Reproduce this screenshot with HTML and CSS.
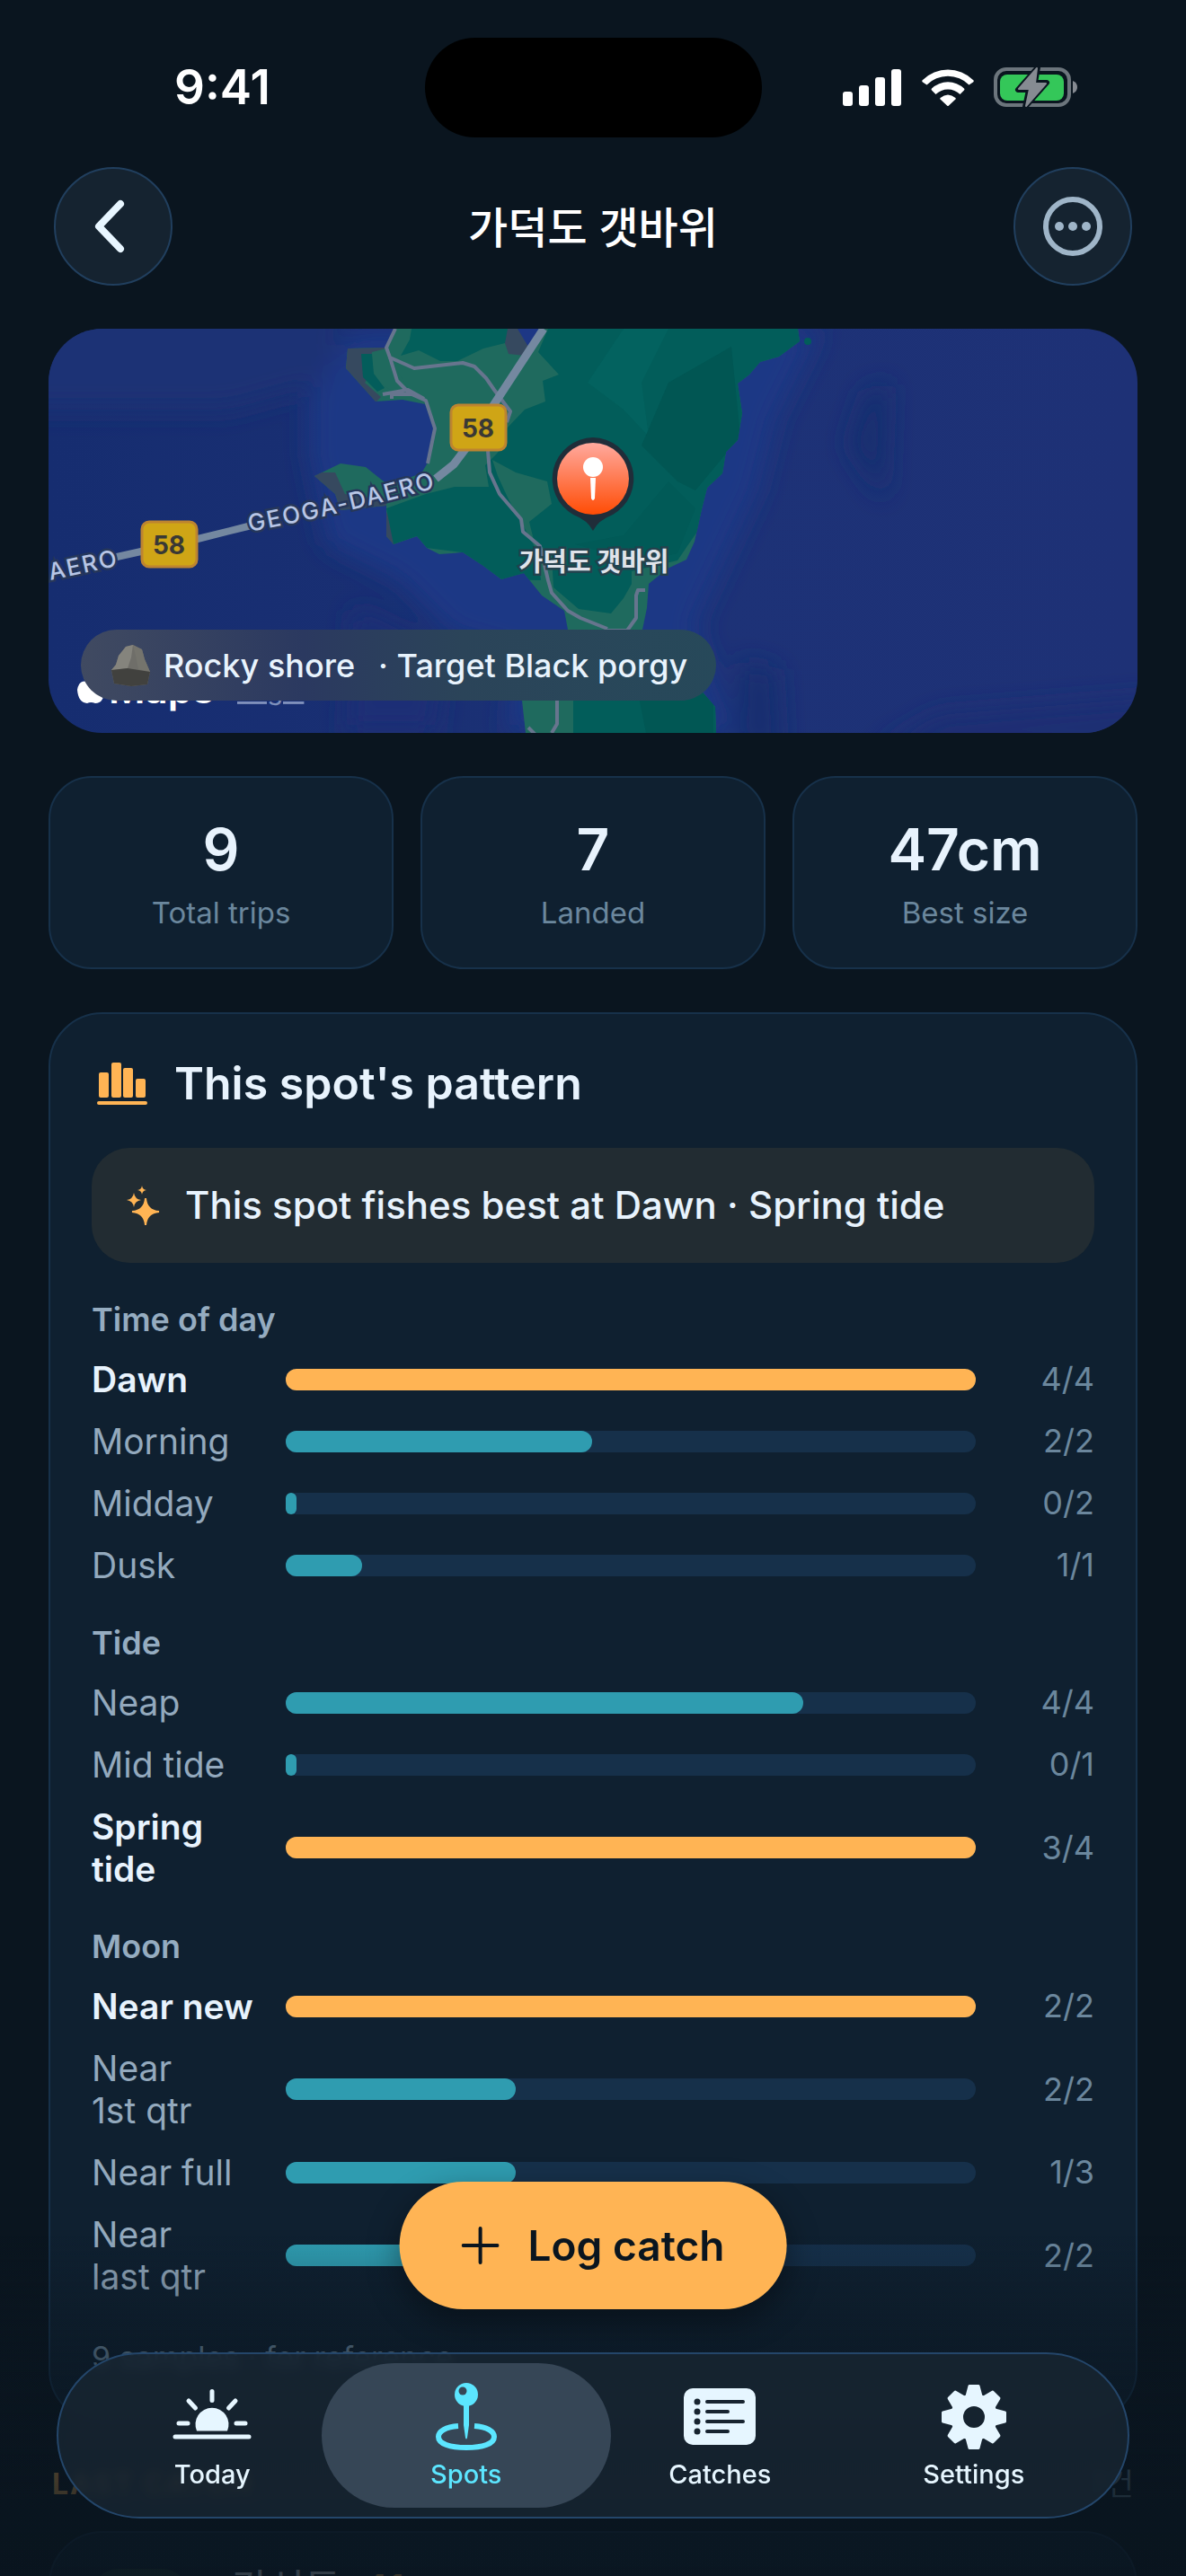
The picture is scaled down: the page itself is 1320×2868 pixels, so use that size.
FILE: index.html
```html
<!DOCTYPE html>
<html lang="en">
  <head>
    <meta charset="UTF-8" />
    <meta name="viewport" content="width=device-width, initial-scale=1.0" />
    <title>가덕도 갯바위</title>
    <link rel="stylesheet" href="styles.css">
  </head>

  <body>
    <div class="status-bar">
      <span class="time">9:41</span>
      <span class="island"></span>
      <span class="status-icons">
        <svg width="66" height="42" viewBox="0 0 66 42" fill="#fff">
          <rect x="0" y="26" width="11" height="16" rx="3" />
          <rect x="18" y="19" width="11" height="23" rx="3" />
          <rect x="36" y="10" width="11" height="32" rx="3" />
          <rect x="54" y="1" width="11" height="41" rx="3" />
        </svg>
        <svg width="58" height="42" viewBox="0 0 58 42" fill="#fff">
          <path d="M1 13 A40 40 0 0 1 57 13 Q58.500 14 57 15.500 L52.500 18.500 A33.500 33.500 0 0 0 5.500 18.500 L1 15.500 Q-.5 14 1 13Z" />
          <path d="M11 22.500 A26 26 0 0 1 47 22.500 Q48 23.500 47 24.500 L42.500 29 A19.500 19.500 0 0 0 15.500 29 L11 24.500 Q10 23.500 11 22.500Z" />
          <path d="M20.500 33 Q29 26 37.500 33 Q38 34 37.500 34.500 L30 41.500 Q29 42.500 28 41.500 L20.500 34.500 Q20 34 20.500 33Z" />
        </svg>
        <svg width="94" height="46" viewBox="0 0 94 46">
          <rect x="2" y="3" width="82" height="40" rx="12" fill="none" stroke="#6c757c" stroke-width="4" />
          <path d="M88 16 Q93 18 93 23 Q93 28 88 30Z" fill="#868b92" />
          <rect x="7" y="9" width="71" height="29" rx="8" fill="#34c759" />
          <path d="M49 1 L27 26 H39 L35 45 L59 18 H46 L49 1Z" fill="#868b92" stroke="#0a151f" stroke-width="6" stroke-linejoin="round" />
          <path d="M48 2 L28 25 H40 L36 44 L58 19 H46 L48 2Z" fill="#868b92" stroke="#868b92" stroke-width="2" stroke-linejoin="round" />
        </svg>
      </span>
    </div>

    <header class="nav-header">
      <button class="round-btn" type="button" aria-label="Back">
        <svg width="48" height="64" viewBox="0 0 48 64"><path d="M32 7 L8 32 L32 57" fill="none" stroke="#e8f6ff" stroke-width="8" stroke-linecap="round" stroke-linejoin="round" /></svg>
      </button>
      <h1>가덕도 갯바위</h1>
      <button class="round-btn" type="button" aria-label="More">
        <svg width="66" height="66" viewBox="0 0 66 66" fill="#9fb5c8">
          <circle cx="33" cy="33" r="30" fill="none" stroke="#9fb5c8" stroke-width="6" />
          <circle cx="18" cy="33" r="5" /><circle cx="33" cy="33" r="5" /><circle cx="48" cy="33" r="5" />
        </svg>
      </button>
    </header>

    <main>
      <section class="map">
        <svg class="map-art" viewBox="0 0 1212 450" preserveAspectRatio="xMidYMid slice">
          <defs>
            <linearGradient id="sea" x1="0" y1="0" x2="1" y2="0">
              <stop offset="0" stop-color="#162d70" />
              <stop offset=".3" stop-color="#192f73" />
              <stop offset=".6" stop-color="#1d3277" />
              <stop offset="1" stop-color="#1e3176" />
            </linearGradient>
            <linearGradient id="pin" x1="0" y1="0" x2="0" y2="1">
              <stop offset="0" stop-color="#ffa99e" />
              <stop offset="1" stop-color="#ff4c05" />
            </linearGradient>
            <filter id="soft" x="-20%" y="-20%" width="140%" height="140%"><feGaussianBlur stdDeviation="14" /></filter>
            <path id="coast" d="M386 0 L376 21 L333 22 L331 44 L347 62 L364 81 L394 79 L419 84 L429 111 L425 144 L415 161 L378 174 L353 154 L325 150 L296 164 L319 184 L325 202 L376 197 L376 231 L384 240 L410 231 L421 244 L435 251 L461 249 L484 264 L504 279 L529 272 L549 297 L574 314 L578 335 L540 390 L527 414 L531 450 H743 L742 421 L729 406 L690 370 L661 335 L666 311 L668 284 L689 267 L710 257 L719 237 L727 201 L733 177 L750 161 L754 137 L767 124 L772 94 L767 61 L780 51 L792 37 L813 31 L836 14 L834 0Z" />
            <clipPath id="land"><use href="#coast" /></clipPath>
          </defs>
          <rect width="1212" height="450" fill="url(#sea)" />
          <g filter="url(#soft)">
            <path d="M-40 -40 H340 L310 60 L200 90 L-40 90Z" fill="#1e3175" />
            <path d="M340 0 L290 80 L290 140 L310 240 L390 280 L450 340 L520 360 L510 450 H760 L720 330 L790 180 L810 100 L860 0Z" fill="#1e3785" />
            <path d="M340 310 L440 360 L430 450 H330Z" fill="#1c2f76" />
            <path d="M910 70 L935 60 L930 190 L890 130Z" fill="#182e70" />
            <path d="M770 370 L810 380 L815 470 H770Z" fill="#162d70" />
            <path d="M920 470 L990 430 L1240 410 V470Z" fill="#1b2e73" />
          </g>
          <use href="#coast" fill="#1f6a5e" />
          <g clip-path="url(#land)">
            <path d="M330 20 H378 L372 32 L352 60 L370 76 L362 84 L325 60Z" fill="#36495f" />
            <path d="M360 26 L376 22 L384 40 L400 66 L390 74 L368 60 L358 40Z" fill="#1f6a5e" />
            <path d="M348 28 H360 L362 50 L374 66 L366 70 L350 54Z" fill="#035d5b" />
            <path d="M290 160 H319 L330 184 L376 192 V205 H315Z" fill="#36495f" />
            <path d="M374 200 L390 232 L384 244 L372 240Z" fill="#36495f" />
            <path d="M404 0 H520 L508 16 L484 22 L455 36 L436 36 L412 24 L392 30 L402 12Z" fill="#035f5b" />
            <path d="M511 0 H545 L530 30 L512 28 L508 16Z" fill="#36495f" />
            <path d="M522 0 H546 L534 20Z" fill="#1d3785" />
            <path d="M545 26 L568 51 L550 58 L553 81 L530 90 L510 111 L500 138 L486 152 L490 176 L452 176 L420 184 L376 200 L384 240 L410 231 L421 244 L461 249 L504 279 L548 280 L545 250 L532 226 L512 190 L500 164 L494 146 L520 160 L555 170 L560 195 L535 215 L540 235 L560 252 L562 288 L590 312 L626 317 L640 300 L649 284 V270 L700 258 L850 40 V0 H556Z" fill="#025d5a" />
            <path d="M640 0 H690 L660 60 L668 120 L640 90 L600 60Z" fill="#03625f" />
            <path d="M690 60 L760 20 L770 120 L720 180 L700 170 L660 130Z" fill="#015653" />
            <path d="M586 240 L640 230 L690 170 L720 200 L700 250 L660 260Z" fill="#015a57" />
            <path d="M584 364 H760 V450 H584Z" fill="#025d5a" />
            <path d="M655 400 L740 380 V450 H665Z" fill="#015754" />
          </g>
          <circle cx="845" cy="14" r="4" fill="#025d5a" />
          <g fill="none" stroke="#67758e" stroke-width="4" stroke-linejoin="round">
            <path d="M386 0 L376 21 L380 32 L407 44 L461 38 L474 42 L487 55 L496 68 L514 92 L510 104" />
            <path d="M380 32 L388 58 L402 72 L420 80 L430 111 L422 150" />
            <path d="M372 73 L400 68 L418 78 M382 78 V73 H404" />
            <path d="M489 136 L491 160 L502 184 L526 212 L528 226 L547 242 L556 280 L560 294 L578 314 L592 322 L622 334" />
            <path d="M664 291 H656 L654 297 V322 L644 336 H620" />
            <path d="M566 414 V440 L560 450 M534 444 L544 454" />
          </g>
          <path d="M551 0 L496 84 L470 126 L451 151 L431 167" fill="none" stroke="#7488a0" stroke-width="9" />
          <path d="M226 219 L166 234 L76 254" fill="none" stroke="#7488a0" stroke-width="8" />
          <path id="road-a" d="M224 226 Q330 206 450 172" fill="none" />
          <path id="road-b" d="M2 280 L100 259" fill="none" />
          <g class="road-name">
            <text><textPath href="#road-a">GEOGA-DAERO</textPath></text>
            <text><textPath href="#road-b">AERO</textPath></text>
          </g>
          <g class="shield">
            <rect x="448" y="85" width="61" height="50" rx="8" />
            <text x="478" y="121">58</text>
            <rect x="104" y="215" width="61" height="50" rx="8" />
            <text x="134" y="251">58</text>
          </g>
          <path d="M606 121 A46 46 0 0 1 628 207 Q612 213 606 225 Q600 213 584 207 A46 46 0 0 1 606 121Z" fill="#202d39" />
          <circle cx="606" cy="167" r="40" fill="url(#pin)" />
          <circle cx="606" cy="154" r="11" fill="#fff" />
          <path d="M603 166 H609 L608 189 Q606 193 604 189Z" fill="#fff" />
          <text class="pin-name" x="607" y="270">가덕도 갯바위</text>
          <path d="M47 394 Q62 388 62 402 Q62 417 52 417 Q47 415 43 417 Q33 416 32 402 Q34 389 47 394Z" fill="#fff" />
          <text class="map-brand" x="67" y="417">Maps</text>
          <text class="map-legal" x="210" y="413">Legal</text>
        </svg>
        <div class="map-chip">
          <svg width="44" height="46" viewBox="0 0 44 46">
            <path d="M8 12 L16 2 L24 0 L34 5 L37 16 L43 30 L40 44 L22 46 L3 43 L0 28 L5 22Z" fill="#6f6e69" />
            <path d="M8 12 L16 2 L24 0 L22 14 L18 26 L0 28 L5 22Z" fill="#85847d" />
            <path d="M24 0 L34 5 L37 16 L43 30 L30 27 L27 12Z" fill="#75746d" />
            <path d="M0 28 L18 26 L43 30 L40 44 L22 46 L3 43Z" fill="#41413e" />
          </svg>
          <span>Rocky shore</span>
          <span class="target">· Target Black porgy</span>
        </div>
      </section>

      <section class="stats">
        <div class="stat"><strong>9</strong><span>Total trips</span></div>
        <div class="stat"><strong>7</strong><span>Landed</span></div>
        <div class="stat"><strong>47cm</strong><span>Best size</span></div>
      </section>

      <section class="pattern">
        <h2>
          <svg width="72" height="60" viewBox="0 0 72 60" fill="#ffb454">
            <rect x="8" y="18" width="11" height="28" rx="2" />
            <rect x="22" y="7" width="11" height="39" rx="2" />
            <rect x="35" y="13" width="11" height="33" rx="2" />
            <rect x="49" y="25" width="11" height="21" rx="2" />
            <rect x="6" y="50" width="56" height="4" rx="2" />
          </svg>
          This spot's pattern
        </h2>

        <p class="tip">
          <svg width="42" height="48" viewBox="0 0 42 48" fill="#ffb454">
            <path d="M24 16 Q25 30 39 31 Q25 32 24 46 Q23 32 9 31 Q23 30 24 16Z" stroke="#ffb454" stroke-width="2" />
            <path d="M11 10 Q12 17 19 18 Q12 19 11 26 Q10 19 3 18 Q10 17 11 10Z" />
            <path d="M20 2 Q20.500 6.500 25 7 Q20.500 7.500 20 12 Q19.500 7.500 15 7 Q19.500 6.500 20 2Z" />
          </svg>
          This spot fishes best at Dawn · Spring tide
        </p>

        <div class="group">
          <h3>Time of day</h3>
          <div class="row best"><span class="name">Dawn</span><span class="bar"><i style="width: 100%"></i></span><span class="count">4/4</span></div>
          <div class="row"><span class="name">Morning</span><span class="bar"><i style="width: 44.400%"></i></span><span class="count">2/2</span></div>
          <div class="row"><span class="name">Midday</span><span class="bar"><i style="width: 0%"></i></span><span class="count">0/2</span></div>
          <div class="row"><span class="name">Dusk</span><span class="bar"><i style="width: 11.100%"></i></span><span class="count">1/1</span></div>
        </div>

        <div class="group">
          <h3>Tide</h3>
          <div class="row"><span class="name">Neap</span><span class="bar"><i style="width: 75%"></i></span><span class="count">4/4</span></div>
          <div class="row"><span class="name">Mid tide</span><span class="bar"><i style="width: 0%"></i></span><span class="count">0/1</span></div>
          <div class="row best"><span class="name">Spring<br>tide</span><span class="bar"><i style="width: 100%"></i></span><span class="count">3/4</span></div>
        </div>

        <div class="group">
          <h3>Moon</h3>
          <div class="row best"><span class="name">Near new</span><span class="bar"><i style="width: 100%"></i></span><span class="count">2/2</span></div>
          <div class="row"><span class="name">Near<br>1st qtr</span><span class="bar"><i style="width: 33.300%"></i></span><span class="count">2/2</span></div>
          <div class="row"><span class="name">Near full</span><span class="bar"><i style="width: 33.300%"></i></span><span class="count">1/3</span></div>
          <div class="row"><span class="name">Near<br>last qtr</span><span class="bar"><i style="width: 33.300%"></i></span><span class="count">2/2</span></div>
        </div>

        <p class="note">9 samples · for reference</p>
      </section>

      <section class="catches">
        <div class="catches-head"><h2>LAST CATCH</h2><span>7건</span></div>
        <article class="catch">
          <span class="thumb"></span>
          <span class="species">감성돔</span>
          <span class="size">41cm</span>
          <span class="released">● Good</span>
        </article>
      </section>
    </main>

    <div class="fade"></div>

    <button class="log-btn" type="button">
      <svg width="42" height="42" viewBox="0 0 42 42"><path d="M21 2 V40 M2 21 H40" stroke="#0a151f" stroke-width="4" stroke-linecap="round" /></svg>
      Log catch
    </button>

    <nav class="tab-bar">
      <a href="#today">
        <svg width="90" height="80" viewBox="0 0 90 80" fill="none" stroke="#e6f6ff" stroke-width="5" stroke-linecap="round">
          <path d="M28 56.500 A18.500 18.500 0 1 1 62 56.500Z" fill="#e6f6ff" stroke="none" />
          <path d="M4 63 H86 M45 12.500 V22.500 M19 23 L26.500 31 M71 23 L63.500 31 M8 48 H18 M72 48 H82" />
        </svg>
        Today
      </a>
      <a href="#spots" class="active">
        <svg width="90" height="80" viewBox="0 0 90 80">
          <path d="M36 51 C22 52 14 57 14 63 C14 71 27 75 45 75 C63 75 76 71 76 63 C76 57 68 52 54 51" fill="none" stroke="#5ce6ff" stroke-width="6" />
          <path d="M42 26 H48 V50 L46 64 Q45 67 44 64 L42 50Z" fill="#5ce6ff" />
          <circle cx="45" cy="16" r="13" fill="#5ce6ff" />
          <circle cx="41" cy="12" r="4.500" fill="#364656" />
        </svg>
        Spots
      </a>
      <a href="#catches">
        <svg width="90" height="80" viewBox="0 0 90 80">
          <rect x="5" y="9" width="80" height="63" rx="10" fill="#e6f6ff" />
          <g fill="#172430"><circle cx="20" cy="24" r="3.500" /><circle cx="20" cy="35" r="3.500" /><circle cx="20" cy="46" r="3.500" /><circle cx="20" cy="57" r="3.500" /></g>
          <path d="M31 24 H71 M31 35 H54 M31 46 H71 M31 57 H54" stroke="#172430" stroke-width="4" stroke-linecap="round" />
        </svg>
        Catches
      </a>
      <a href="#settings">
        <svg width="90" height="80" viewBox="0 0 90 80">
          <g transform="translate(45 41)" fill="#e6f6ff" stroke="#e6f6ff">
            <circle r="19" fill="none" stroke-width="14" />
            <g stroke-width="3" stroke-linejoin="round">
              <path id="tooth" d="M-8 -23 L-5 -34.500 H5 L8 -23Z" />
              <use href="#tooth" transform="rotate(45)" /><use href="#tooth" transform="rotate(90)" />
              <use href="#tooth" transform="rotate(135)" /><use href="#tooth" transform="rotate(180)" />
              <use href="#tooth" transform="rotate(225)" /><use href="#tooth" transform="rotate(270)" />
              <use href="#tooth" transform="rotate(315)" />
            </g>
          </g>
        </svg>
        Settings
      </a>
    </nav>
  </body>
</html>
```

FILE: styles.css
```css
* {
  box-sizing: border-box;
  margin: 0;
}

body {
  height: 100vh;
  overflow: hidden;
  background-color: #0a151f;
  color: #e8f3fd;
  font-family: Inter, "Noto Sans CJK KR", sans-serif;
}

button {
  border: none;
  font-family: inherit;
  cursor: pointer;
}

svg {
  flex: none;
}

/* status bar */
.status-bar {
  display: grid;
  grid-template-columns: 1fr 375px 1fr;
  align-items: center;
  height: 186px;
  padding-top: 8px;
}

.time {
  padding-left: 194px;
  color: #fff;
  font-size: 53px;
  font-weight: 600;
}

.island {
  height: 111px;
  border-radius: 56px;
  background-color: #000;
}

.status-icons {
  display: flex;
  justify-content: flex-end;
  align-items: center;
  gap: 22px;
  padding-right: 120px;
}

/* header */
.nav-header {
  display: flex;
  justify-content: space-between;
  align-items: center;
  padding: 0 60px;
}

.nav-header h1 {
  padding-bottom: 4px;
  color: #fff;
  font-size: 48px;
  font-weight: 500;
}

.round-btn {
  display: flex;
  justify-content: center;
  align-items: center;
  width: 132px;
  height: 132px;
  border: 2px solid #213f5e;
  border-radius: 50%;
  background-color: #152330;
}

main {
  display: flex;
  flex-direction: column;
  gap: 48px;
  padding: 48px 54px 0;
}

/* map */
.map {
  position: relative;
  height: 450px;
  border-radius: 60px;
  overflow: hidden;
}

.map-art {
  display: block;
  width: 100%;
  height: 100%;
}

.road-name {
  fill: #b8c6e6;
  stroke: #26375a;
  stroke-width: 5px;
  paint-order: stroke;
  font-size: 26px;
  font-weight: 500;
  letter-spacing: 2px;
}

.shield rect {
  fill: #cfa516;
  stroke: #bd8430;
  stroke-width: 3px;
}

.shield text {
  fill: #393835;
  font-size: 28px;
  font-weight: 700;
  text-anchor: middle;
}

.pin-name {
  fill: #dfe3ea;
  stroke: #24414d;
  stroke-width: 5px;
  paint-order: stroke;
  font-size: 29px;
  font-weight: 700;
  text-anchor: middle;
}

.map-brand {
  fill: #fff;
  font-size: 44px;
  font-weight: 600;
}

.map-legal {
  fill: #7f90bb;
  font-size: 29px;
  text-decoration: underline;
}

.map-chip {
  position: absolute;
  left: 36px;
  bottom: 36px;
  display: flex;
  align-items: center;
  gap: 14px;
  height: 79px;
  padding: 0 32px 0 34px;
  border-radius: 40px;
  background: linear-gradient(90deg, #404a61, #2b3960 35%, #2b4459 60%, #27495a);
  font-size: 36px;
  font-weight: 500;
}

.map-chip .target {
  margin-left: 12px;
}

/* stats */
.stats {
  display: grid;
  grid-template-columns: repeat(3, 1fr);
  gap: 30px;
}

.stat {
  display: flex;
  flex-direction: column;
  align-items: center;
  gap: 10px;
  padding: 40px 0 41px;
  border: 2px solid #17314a;
  border-radius: 48px;
  background-color: #0f2030;
}

.stat strong {
  font-size: 64px;
  font-weight: 600;
  line-height: 80px;
}

.stat span {
  color: #6b879d;
  font-size: 33px;
  line-height: 40px;
}

/* pattern card */
.pattern {
  display: flex;
  flex-direction: column;
  gap: 42px;
  padding: 47px 46px 46px;
  border: 2px solid #17314a;
  border-radius: 60px;
  background-color: #0f2030;
}

.pattern h2 {
  display: flex;
  gap: 20px;
  font-size: 50px;
  font-weight: 600;
  line-height: 60px;
}

.tip {
  display: flex;
  align-items: center;
  gap: 26px;
  height: 128px;
  padding: 0 36px;
  border-radius: 42px;
  background-color: #222c32;
  font-size: 42px;
  font-weight: 500;
  line-height: 50px;
  white-space: nowrap;
}

.group {
  display: flex;
  flex-direction: column;
  gap: 22px;
}

.group h3 {
  color: #95acc0;
  font-size: 36px;
  font-weight: 600;
  line-height: 42px;
}

.row {
  display: grid;
  grid-template-columns: 180px 1fr 96px;
  align-items: center;
  gap: 36px;
  color: #93a9bd;
  font-size: 39px;
  line-height: 47px;
}

.row.best .name {
  color: #e8f3fd;
  font-weight: 600;
}

.name {
  white-space: nowrap;
}

.bar {
  height: 24px;
  border-radius: 12px;
  background-color: #16304a;
}

.bar i {
  display: block;
  height: 100%;
  min-width: 12px;
  border-radius: 12px;
  background-color: #2f9cb0;
}

.best .bar i {
  background-color: #ffb454;
}

.count {
  color: #6b879d;
  font-size: 36px;
  text-align: right;
}

.note {
  color: #6b879d;
  font-size: 34px;
  line-height: 50px;
}

/* last catch */
.catches-head {
  display: flex;
  justify-content: space-between;
  padding: 0 4px;
  color: #6b879d;
  font-size: 34px;
  line-height: 40px;
}

.catches-head h2 {
  color: #ffb454;
  font-size: 32px;
  font-weight: 700;
  line-height: 40px;
  letter-spacing: 2px;
}

.catch {
  display: flex;
  gap: 24px;
  margin-top: 32px;
  padding: 40px 46px;
  border: 2px solid #17314a;
  border-radius: 60px;
  background-color: #0f2030;
  font-size: 44px;
  line-height: 44px;
}

.thumb {
  width: 108px;
  height: 108px;
  margin-right: 24px;
  border-radius: 30px;
  background-color: #1d3b33;
}

.size {
  color: #ffb454;
  font-weight: 600;
}

.released {
  color: #5f9a58;
  font-size: 36px;
}

.fade {
  position: fixed;
  right: 0;
  bottom: 0;
  left: 0;
  height: 380px;
  background: linear-gradient(transparent, rgba(10, 21, 31, 0.5) 37%, rgba(10, 21, 31, 0.8) 75%, rgba(10, 21, 31, 0.82));
}

/* floating button and tabs */
.log-btn {
  position: fixed;
  bottom: 297px;
  left: 50%;
  transform: translateX(-50%);
  display: flex;
  align-items: center;
  gap: 32px;
  height: 142px;
  padding: 0 69px;
  border-radius: 71px;
  background-color: #ffb454;
  box-shadow: 0 12px 36px rgba(0, 0, 0, 0.4);
  color: #0a151f;
  font-size: 46px;
  font-weight: 600;
  white-space: nowrap;
}

.tab-bar {
  position: fixed;
  right: 63px;
  bottom: 64px;
  left: 63px;
  display: flex;
  height: 185px;
  padding: 29px 30px;
  border: 2px solid #24466a;
  border-radius: 93px;
  background-color: rgba(24, 38, 50, 0.8);
  backdrop-filter: blur(6px);
}

.tab-bar a {
  position: relative;
  display: flex;
  flex: 1;
  flex-direction: column;
  align-items: center;
  gap: 7px;
  color: #e6f6ff;
  font-size: 29px;
  font-weight: 500;
  line-height: 36px;
  text-decoration: none;
}

.tab-bar a.active {
  color: #5ce6ff;
}

.tab-bar a.active::before {
  content: "";
  position: absolute;
  inset: -19px -20px;
  z-index: -1;
  border-radius: 81px;
  background-color: #364656;
}
```
